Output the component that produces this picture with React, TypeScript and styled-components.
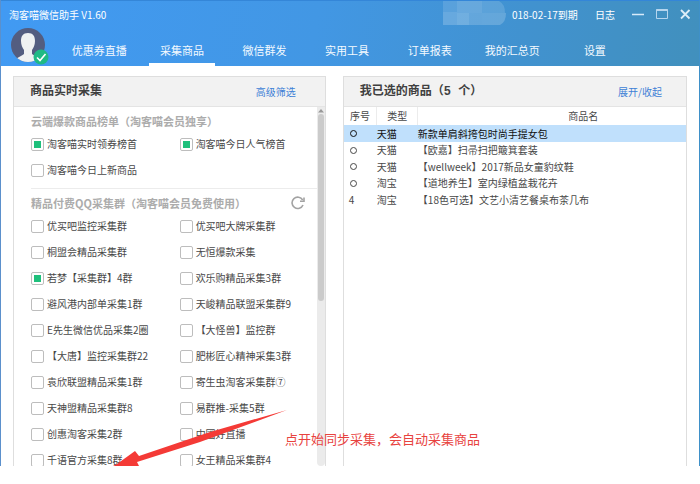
import React from "react";
import styled, { createGlobalStyle } from "styled-components";

const GlobalStyle = createGlobalStyle`
  * { box-sizing: border-box; }
  body { margin: 0; background: #fff; }
  body, button, input { font-family: "Noto Sans CJK SC", "Liberation Sans", sans-serif; }
`;

const Window = styled.div`
  position: relative;
  display: flex;
  flex-direction: column;
  height: calc(100vh - 18px);
  overflow: hidden;
  border: solid #5b90cc;
  border-width: 0 1px;
  border-right-color: #3f90c8;
  background: #fff;
  color: #484848;
  font-size: 10px;
  line-height: 16px;
`;

const Header = styled.header`
  flex: none;
  background: linear-gradient(100deg, #419af3 0%, #4297e4 45%, #4192cf 75%, #4190bd 100%);
  border-top: 1px solid #3486d8;
  color: #fff;
`;

const TitleBar = styled.div`
  display: flex;
  align-items: center;
  height: 27px;
  padding: 0 8px;
`;

const AppTitle = styled.h1`
  flex: 1;
  margin: 0;
  font-size: 10px;
  font-weight: 400;
`;

const Blot = styled.svg`
  width: 64px;
  height: 25px;
  margin-right: 5px;
  align-self: flex-start;
`;

const Expiry = styled.span`
  width: 83px;
  white-space: nowrap;
`;

const PlainButton = styled.button`
  display: flex;
  align-items: center;
  padding: 0;
  border: 0;
  background: none;
  color: inherit;
  font-size: 10px;
  line-height: 16px;
  cursor: pointer;
`;

const WindowButtons = styled.div`
  display: flex;
  gap: 11px;
  margin-left: 17px;
`;

const NavRow = styled.div`
  display: flex;
  height: 38px;
`;

const Avatar = styled.svg`
  flex: none;
  width: 38px;
  height: 38px;
  margin: 0 9px 0 10px;
`;

const Nav = styled.nav`
  flex: 1;
  display: grid;
  grid-template-columns: repeat(7, 1fr);
  margin-right: 9%;
`;

const NavLink = styled.a<{ $active?: boolean }>`
  margin: 0 8px;
  padding-top: 10px;
  border-bottom: 3px solid ${(p) => (p.$active ? "#fff" : "transparent")};
  color: #f4faff;
  font-size: 11px;
  line-height: 24px;
  text-align: center;
  text-decoration: none;
  white-space: nowrap;
`;

const Main = styled.main`
  flex: 1;
  min-height: 0;
  display: grid;
  grid-template-columns: 10fr 11fr;
  grid-template-rows: minmax(0, 1fr);
  gap: 17px;
  padding: 10px 12px 0;
`;

const Panel = styled.section`
  display: flex;
  flex-direction: column;
  min-width: 0;
  border: 1px solid #dedede;
  border-bottom: 0;
`;

const PanelHeader = styled.div<{ $inset: string }>`
  flex: none;
  display: flex;
  align-items: center;
  justify-content: space-between;
  height: 30px;
  padding: 0 ${(p) => p.$inset} 0 16px;
  border-bottom: 1px solid #e4e4e4;
  background: #f2f2f2;
`;

const PanelTitle = styled.h2`
  margin: 0;
  color: #404040;
  font-family: "Liberation Mono", "Noto Sans CJK SC", monospace;
  font-size: 12px;
  font-weight: 700;
`;

const PanelLink = styled.a`
  color: #3d7fd6;
  text-decoration: none;
`;

const ScrollArea = styled.div`
  flex: 1;
  min-height: 0;
  display: flex;
`;

const ScrollContent = styled.div`
  flex: 1;
  overflow: hidden;
  padding-left: 17px;
`;

const ScrollBar = styled.div`
  flex: none;
  width: 8px;
  display: flex;
  flex-direction: column;
  align-items: center;
  background: #ebebeb;
  border-radius: 0 0 4px 4px;
`;

const ScrollArrow = styled.svg`
  flex: none;
  width: 8px;
  height: 7px;
`;

const ScrollThumb = styled.div`
  width: 6px;
  height: 52%;
  border-radius: 3px;
  background: #cbcbcb;
`;

const Group = styled.fieldset`
  min-width: 0;
  margin: 0;
  padding: 4px 0 5px;
  border: 0;

  & + & { border-top: 1px solid #ececec; }
`;

const GroupHead = styled.div`
  display: flex;
  align-items: center;
  justify-content: space-between;
  height: 20px;
  padding-right: 12px;
`;

const GroupTitle = styled.h3`
  margin: 0;
  color: #acacac;
  font-size: 11px;
  font-weight: 700;
  white-space: nowrap;
`;

const Options = styled.div`
  display: grid;
  grid-template-columns: 13fr 12fr;
  grid-auto-rows: 26px;
`;

const Option = styled.label`
  display: flex;
  align-items: center;
  gap: 3px;
  min-width: 0;
  white-space: nowrap;
`;

const Check = styled.input`
  appearance: none;
  flex: none;
  display: grid;
  place-items: center;
  width: 13px;
  height: 13px;
  margin: 0;
  border: 1px solid #bdbdbd;
  border-radius: 2px;
  background: #fff;

  &:checked::after {
    content: "";
    width: 7px;
    height: 7px;
    background: #1fc07c;
  }
`;

const Table = styled.table`
  width: 100%;
  border-collapse: collapse;
  table-layout: fixed;
`;

const Th = styled.th<{ $width?: string }>`
  width: ${(p) => p.$width ?? "auto"};
  height: 18px;
  padding: 0;
  border-left: 1px solid #ececec;
  font-weight: 400;
  text-align: center;

  &:first-child { border-left: 0; }
  &:last-child { padding-left: 62px; }
`;

const Row = styled.tr<{ $selected?: boolean }>`
  height: 16px;
  background: ${(p) => (p.$selected ? "#c0e0fc" : "transparent")};
  color: ${(p) => (p.$selected ? "#111" : "inherit")};

  &:nth-child(odd) { height: 17px; }
`;

const Td = styled.td`
  padding: 0;
  white-space: nowrap;

  &:first-child { padding-left: 5px; }
`;

const Ring = styled.svg`
  display: block;
  width: 9px;
  height: 9px;
`;

const Pointer = styled.svg`
  position: absolute;
  left: 109px;
  top: 400px;
  width: 180px;
  height: 80px;
  pointer-events: none;
`;

const Note = styled.p`
  position: absolute;
  left: 284px;
  top: 429px;
  margin: 0;
  color: #e8433f;
  font-size: 13px;
  line-height: 20px;
  white-space: nowrap;
`;

const navItems = ["优惠券直播", "采集商品", "微信群发", "实用工具", "订单报表", "我的汇总页", "设置"];

const cloudLists = [
  { name: "淘客喵实时领券榜首", on: true },
  { name: "淘客喵今日人气榜首", on: true },
  { name: "淘客喵今日上新商品", on: false },
];

const groupNames = [
  "优买吧监控采集群", "优买吧大牌采集群",
  "桐盟会精品采集群", "无恒爆款采集",
  "若梦【采集群】4群", "欢乐购精品采集3群",
  "避风港内部单采集1群", "天峻精品联盟采集群9",
  "E先生微信优品采集2圈", "【大怪兽】监控群",
  "【大唐】监控采集群22", "肥彬匠心精神采集3群",
  "袁欣联盟精品采集1群", "寄生虫淘客采集群⑦",
  "天神盟精品采集群8", "易群推-采集5群",
  "创惠淘客采集2群", "中國好直播",
  "千语官方采集8群", "女王精品采集群4",
];

const products = [
  { type: "天猫", name: "新款单肩斜挎包时尚手提女包" },
  { type: "天猫", name: "【欧嘉】扫帚扫把簸箕套装" },
  { type: "天猫", name: "【wellweek】2017新品女童豹纹鞋" },
  { type: "淘宝", name: "【道地养生】室内绿植盆栽花卉" },
  { type: "淘宝", name: "【18色可选】文艺小清艺餐桌布茶几布", no: "4" },
];

export default function App() {
  return (
    <>
      <GlobalStyle />
      <Window lang="zh-CN">
        <Header>
          <TitleBar>
            <AppTitle>淘客喵微信助手 V1.60</AppTitle>
            <Blot viewBox="0 0 64 25" aria-hidden="true">
              <g fill="#fff">
                <path d="M0 11h14v13H0z" opacity=".2" />
                <path d="M0 0h14v11H0z" opacity=".13" />
                <path d="M14 0h25v12H14z" opacity=".2" />
                <path d="M14 12h12v12H14z" opacity=".25" />
                <path d="M26 12h13v12H26z" opacity=".18" />
                <path d="M39 0h17q6 3 6 12H39z" opacity=".14" />
                <path d="M39 12h24q0 9-6 12H39z" opacity=".19" />
              </g>
            </Blot>
            <Expiry>018-02-17到期</Expiry>
            <PlainButton type="button">日志</PlainButton>
            <WindowButtons>
              <PlainButton type="button" aria-label="最小化">
                <svg width="13" height="12" viewBox="0 0 13 12"><path d="M0 5.500h12" stroke="#d7eafa" strokeWidth="1.500" /></svg>
              </PlainButton>
              <PlainButton type="button" aria-label="最大化">
                <svg width="13" height="12" viewBox="0 0 13 12" fill="none" stroke="#b5d5ee">
                  <path d="M.5.5h11v9H.5z" />
                  <path d="M.5 1h11" strokeWidth="2" />
                </svg>
              </PlainButton>
              <PlainButton type="button" aria-label="关闭">
                <svg width="11" height="12" viewBox="0 0 11 12"><path d="M1 1l8.500 8.500M9.500 1L1 9.500" stroke="#dcedf8" strokeWidth="1.800" /></svg>
              </PlainButton>
            </WindowButtons>
          </TitleBar>
          <NavRow>
            <Avatar viewBox="0 0 38 38" role="img" aria-label="头像">
              <clipPath id="face"><circle cx="17" cy="17" r="17" /></clipPath>
              <g clipPath="url(#face)">
                <path fill="#535d80" d="M0 0h34v34H0z" />
                <path fill="#eff1f2" d="M17 5c5 0 7 3 7 8 0 4-1.500 7-3 9v4c2 2 6 3 8 5v4H5v-4c2-2 6-3 8-5v-4c-1.500-2-3-5-3-9 0-5 2-8 7-8z" />
              </g>
              <circle cx="30" cy="29" r="7.500" fill="#1fba85" />
              <path d="M26 29.500l3 3 5.500-6.500" fill="none" stroke="#fff" strokeWidth="1.600" />
            </Avatar>
            <Nav>
              {navItems.map((item) => (
                <NavLink key={item} href="#" $active={item === "采集商品"}>{item}</NavLink>
              ))}
            </Nav>
          </NavRow>
        </Header>

        <Main>
          <Panel>
            <PanelHeader $inset="29px">
              <PanelTitle>商品实时采集</PanelTitle>
              <PanelLink href="#">高级筛选</PanelLink>
            </PanelHeader>
            <ScrollArea>
              <ScrollContent>
                <Group aria-label="云端爆款商品榜单">
                  <GroupHead>
                    <GroupTitle>云端爆款商品榜单（淘客喵会员独享）</GroupTitle>
                  </GroupHead>
                  <Options>
                    {cloudLists.map((o) => (
                      <Option key={o.name}><Check type="checkbox" defaultChecked={o.on} />{o.name}</Option>
                    ))}
                  </Options>
                </Group>
                <Group aria-label="精品付费QQ采集群">
                  <GroupHead>
                    <GroupTitle>精品付费QQ采集群（淘客喵会员免费使用）</GroupTitle>
                    <PlainButton type="button" aria-label="刷新">
                      <svg width="14" height="14" viewBox="0 0 14 14" fill="none" stroke="#a3a3a3" strokeWidth="1.600">
                        <path d="M11.700 4A5.700 5.700 0 1 0 12 9" />
                        <path d="M13 1.500v3.700H9" />
                      </svg>
                    </PlainButton>
                  </GroupHead>
                  <Options>
                    {groupNames.map((name) => (
                      <Option key={name}><Check type="checkbox" defaultChecked={name.startsWith("若梦")} />{name}</Option>
                    ))}
                  </Options>
                </Group>
              </ScrollContent>
              <ScrollBar aria-hidden="true">
                <ScrollArrow viewBox="0 0 8 7"><path d="M1 5.500l3-3.500 3 3.500z" fill="#999" /></ScrollArrow>
                <ScrollThumb />
              </ScrollBar>
            </ScrollArea>
          </Panel>

          <Panel>
            <PanelHeader $inset="24px">
              <PanelTitle>我已选的商品（5 个）</PanelTitle>
              <PanelLink href="#">展开/收起</PanelLink>
            </PanelHeader>
            <Table>
              <thead>
                <tr>
                  <Th $width="33px">序号</Th>
                  <Th $width="41px">类型</Th>
                  <Th>商品名</Th>
                </tr>
              </thead>
              <tbody>
                {products.map((p, i) => (
                  <Row key={p.name} $selected={i === 0}>
                    <Td>
                      {p.no ?? (
                        <Ring viewBox="0 0 9 9" role="img" aria-label="待处理">
                          <circle cx="4.500" cy="4.500" r="3" fill="none" stroke="currentColor" />
                        </Ring>
                      )}
                    </Td>
                    <Td>{p.type}</Td>
                    <Td>{p.name}</Td>
                  </Row>
                ))}
              </tbody>
            </Table>
          </Panel>
        </Main>

        <Pointer viewBox="0 0 180 80" aria-hidden="true">
          <path fill="#f43a36" d="M177 10L100 32 29 56 25 51 7 64 3 66 31 70 27 62 90 42z" />
        </Pointer>
        <Note>点开始同步采集，会自动采集商品</Note>
      </Window>
    </>
  );
}
